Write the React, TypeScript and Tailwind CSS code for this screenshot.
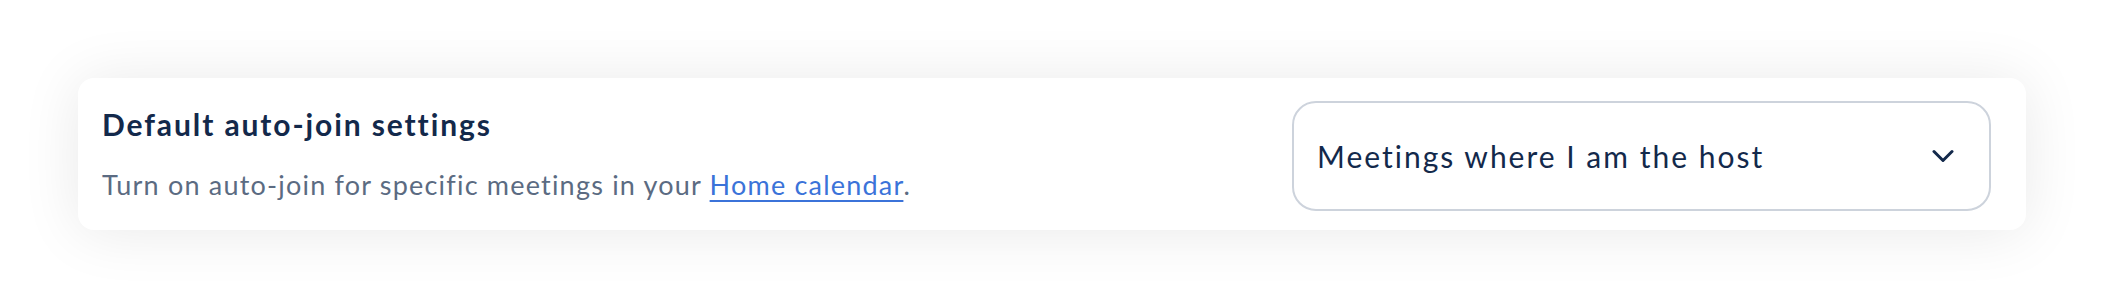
import React from "react";

export default function App() {
  return (
    <div className="w-[2104px] h-[308px] bg-white px-[78px] pt-[78px]" style={{ fontFamily: "Lato, 'Open Sans', sans-serif" }}>
      <div className="flex h-[152px] items-center justify-between rounded-[16px] bg-white pl-[24px] pr-[35px] shadow-[0_2px_60px_rgba(0,0,0,0.09)]">
        <div className="flex flex-col gap-[25px] pt-[1px]">
          <h2 className="text-[30px] leading-[36px] font-bold tracking-[1.9px] text-[#13294b]">Default auto-join settings</h2>
          <p className="text-[27px] leading-[36px] tracking-[1.2px] text-[#5b6b82]">
            Turn on auto-join for specific meetings in your{" "}
            <a href="#" className="text-[#3b73d9] underline decoration-2 underline-offset-[5px]">Home calendar</a>.
          </p>
        </div>
        <button className="flex h-[110px] w-[699px] items-center justify-between rounded-[24px] border-2 border-[#cdd3dc] bg-white pl-[23px] pr-[35px] mt-[3px]">
          <span className="text-[30px] leading-[36px] tracking-[2px] text-[#13294b]">Meetings where I am the host</span>
          <svg width="22" height="14" viewBox="0 0 22 14" fill="none">
            <path d="M2 2.5 L11 11.5 L20 2.5" stroke="#13294b" strokeWidth="3" strokeLinecap="round" strokeLinejoin="round" />
          </svg>
        </button>
      </div>
    </div>
  );
}
